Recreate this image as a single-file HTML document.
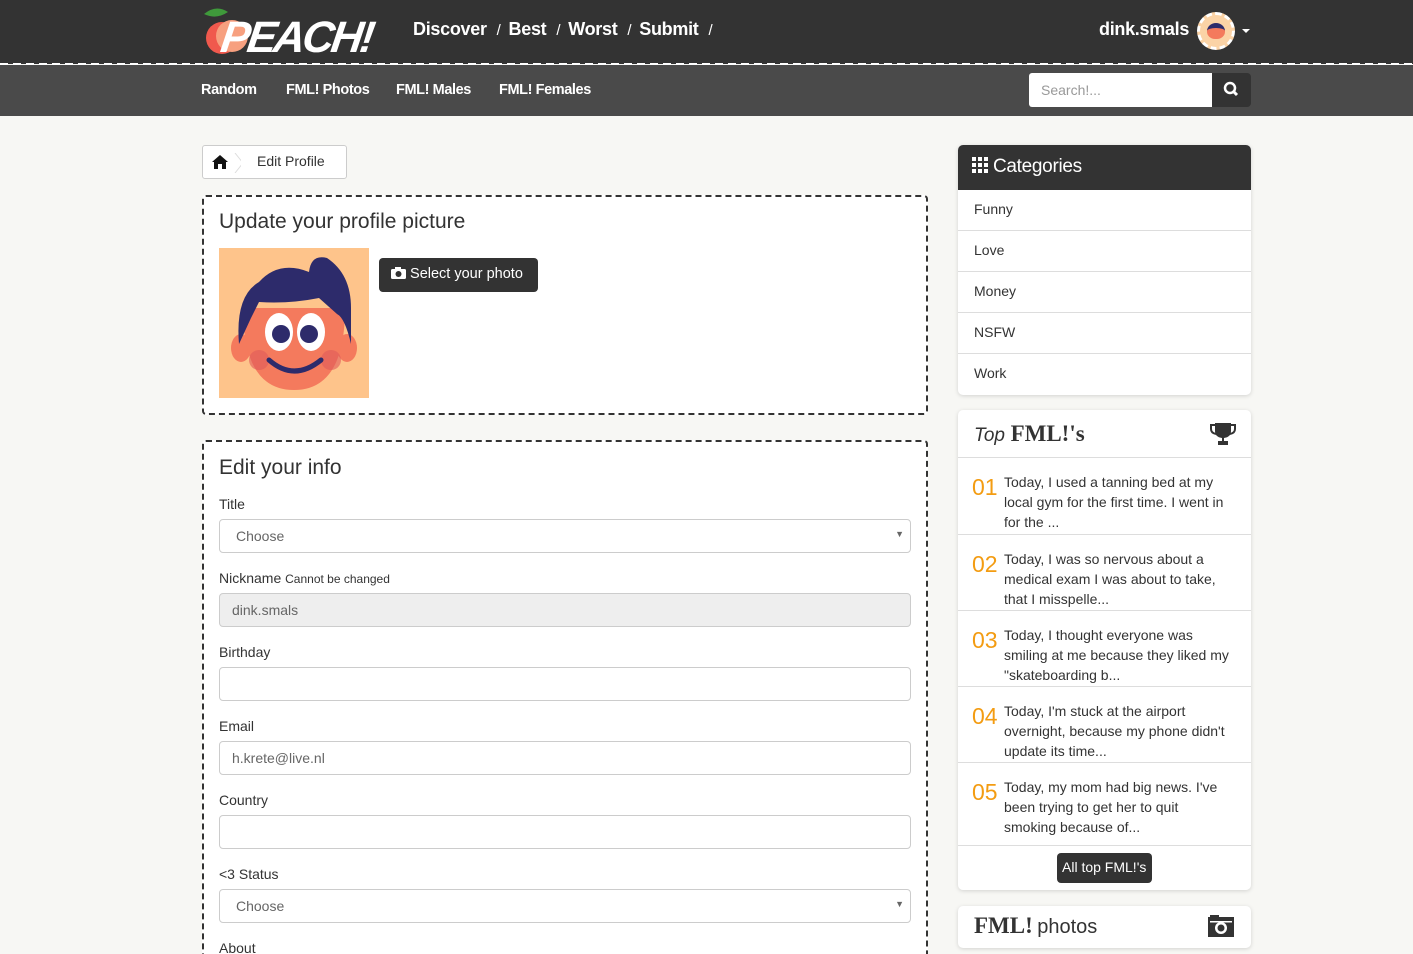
<!DOCTYPE html>
<html style="width:1413px;height:954px;overflow:hidden"><head><meta charset="utf-8"><style>
*{box-sizing:border-box}
body{margin:0;width:1413px;height:954px;overflow:hidden;position:relative;background:#f7f7f4;font-family:"Liberation Sans","DejaVu Sans",sans-serif;color:#333}
.top{position:absolute;left:0;top:0;width:1413px;height:64px;background:#333}
.dash{position:absolute;left:0;top:63px;width:1413px;height:2px;background:repeating-linear-gradient(90deg,#fff 0 8px,transparent 8px 13px)}
.sub{position:absolute;left:0;top:65px;width:1413px;height:51px;background:#4a4a4a}
.nav{position:absolute;top:19px;color:#fff;font-weight:bold;font-size:18px;letter-spacing:-0.3px}
.nav span{margin:0 8px 0 10px;font-weight:normal;font-size:15px}
.sn{position:absolute;top:82px;color:#fff;font-weight:bold;font-size:14.5px;letter-spacing:-0.4px}
.box{position:absolute;background:#fff;border:2px dashed #333;border-radius:4px}
.lbl{position:absolute;left:219px;font-size:14px;color:#333}
.inp{position:absolute;left:219px;width:692px;height:34px;border:1px solid #ccc;border-radius:4px;background:#fff;font-size:14px;color:#666;padding:8px 12px}
.card{position:absolute;left:958px;width:293px;background:#fff;border-radius:5px;box-shadow:0 1px 4px rgba(0,0,0,.15)}
.cat{height:41px;border-bottom:1px solid #ddd;padding:11px 16px;font-size:14px}
.item{position:relative;height:76px;border-top:1px solid #ddd;padding:14px 20px 0 46px;font-size:14px;line-height:20px;color:#333}
.item b{position:absolute;left:14px;top:19px;color:#f39c12;font-size:23px;font-weight:normal}
</style></head><body>
<div class="top"></div><div class="dash"></div><div class="sub"></div>
<svg style="position:absolute;left:202px;top:4px" width="190" height="56" viewBox="0 0 190 56">
<circle cx="20" cy="34" r="16" fill="#f0594d"/><circle cx="30" cy="32" r="16" fill="#f7a07f"/>
<path d="M2 10 Q14 0 26 8 Q14 16 2 10Z" fill="#3f9a3b"/>
<text x="24" y="48" font-family="Liberation Sans" font-weight="bold" font-style="italic" font-size="44" fill="#fff" letter-spacing="-3" transform="skewX(-8)">PEACH!</text>
</svg>
<div class="nav" style="left:413px">Discover<span>/</span>Best<span>/</span>Worst<span>/</span>Submit<span>/</span></div>
<div class="nav" style="left:1099px">dink.smals</div>
<div style="position:absolute;left:1197px;top:12px;width:38px;height:38px;border-radius:50%;background:#fbd3a6;border:3px dashed #fff"><div style="margin:8px auto;width:18px;height:16px;border-radius:50% 50% 45% 45%;background:#f47a5d;border-top:5px solid #2d2b6b"></div></div>
<div style="position:absolute;left:1242px;top:29px;border:4px solid transparent;border-top-color:#fff"></div>
<div class="sn" style="left:201px">Random</div><div class="sn" style="left:286px">FML! Photos</div><div class="sn" style="left:396px">FML! Males</div><div class="sn" style="left:499px">FML! Females</div>
<div style="position:absolute;left:1029px;top:73px;width:184px;height:34px;background:#fff;border-radius:3px 0 0 3px;padding:9px 12px;font-size:14px;color:#999">Search!...</div>
<div style="position:absolute;left:1212px;top:73px;width:39px;height:34px;background:#333;border-radius:0 4px 4px 0"><svg width="39" height="34"><circle cx="18" cy="15" r="5" fill="none" stroke="#fff" stroke-width="2.5"/><line x1="22" y1="19" x2="25" y2="22" stroke="#fff" stroke-width="3"/></svg></div>

<div style="position:absolute;left:202px;top:145px;width:145px;height:34px;background:#fff;border:1px solid #ccc;border-radius:3px"></div>
<svg style="position:absolute;left:211px;top:153px" width="30" height="20"><path d="M9 2 L1 9 H3 V16 H7 V11 H11 V16 H15 V9 H17Z" fill="#111"/><path d="M24 0 L32 10 L24 20" fill="none" stroke="#ddd"/></svg>
<div style="position:absolute;left:257px;top:153px;font-size:14px">Edit Profile</div>

<div class="box" style="left:202px;top:195px;width:726px;height:220px"></div>
<div style="position:absolute;left:219px;top:210px;font-size:21px;color:#333">Update your profile picture</div>
<svg style="position:absolute;left:219px;top:248px" width="150" height="150" viewBox="0 0 150 150">
<rect width="150" height="150" fill="#fec48b"/>
<ellipse cx="22" cy="100" rx="10" ry="14" fill="#f47a5d"/><ellipse cx="128" cy="100" rx="10" ry="14" fill="#f47a5d"/>
<path d="M24 60 Q24 142 75 142 Q126 142 126 60Z" fill="#f47a5d"/>
<path d="M20 96 Q16 48 40 34 Q60 12 90 24 Q92 6 108 10 Q132 26 132 60 L132 96 Q126 70 118 66 L100 50 Q70 56 40 54 L32 70Z" fill="#2d2b6b"/>
<ellipse cx="60" cy="84" rx="14" ry="19" fill="#fff"/><ellipse cx="92" cy="84" rx="14" ry="19" fill="#fff"/>
<circle cx="62" cy="86" r="9" fill="#2d2b6b"/><circle cx="90" cy="86" r="9" fill="#2d2b6b"/>
<circle cx="40" cy="112" r="10" fill="#e05a5a" opacity=".6"/><circle cx="112" cy="112" r="10" fill="#e05a5a" opacity=".6"/>
<path d="M50 112 Q75 134 102 112" fill="none" stroke="#2d2b6b" stroke-width="5" stroke-linecap="round"/>
</svg>
<div style="position:absolute;left:379px;top:258px;width:159px;height:34px;background:#333;border-radius:4px;color:#fff;font-size:14.5px;padding:8px 0 0 12px"><svg width="15" height="12" style="vertical-align:-1px"><rect x="0" y="2" width="15" height="10" rx="1.5" fill="#fff"/><rect x="4" y="0" width="6" height="3" fill="#fff"/><circle cx="7.5" cy="7" r="3" fill="#333"/></svg> Select your photo</div>

<div class="box" style="left:202px;top:440px;width:726px;height:540px"></div>
<div style="position:absolute;left:219px;top:456px;font-size:21px">Edit your info</div>
<div class="lbl" style="top:496px">Title</div>
<div class="inp" style="top:519px;padding-left:16px">Choose<span style="position:absolute;right:6px;top:9px;font-size:9px">▼</span></div>
<div class="lbl" style="top:570px">Nickname <small style="font-size:12px">Cannot be changed</small></div>
<div class="inp" style="top:593px;background:#eee">dink.smals</div>
<div class="lbl" style="top:644px">Birthday</div>
<div class="inp" style="top:667px"></div>
<div class="lbl" style="top:718px">Email</div>
<div class="inp" style="top:741px">h.krete@live.nl</div>
<div class="lbl" style="top:792px">Country</div>
<div class="inp" style="top:815px"></div>
<div class="lbl" style="top:866px">&lt;3 Status</div>
<div class="inp" style="top:889px;padding-left:16px">Choose<span style="position:absolute;right:6px;top:9px;font-size:9px">▼</span></div>
<div class="lbl" style="top:940px">About</div>

<div class="card" style="top:145px;height:250px;overflow:hidden">
<div style="height:45px;background:#333;color:#fff;font-size:19px;padding:11px 14px;letter-spacing:-0.3px"><span style="display:inline-block;width:16px;height:16px;background:repeating-linear-gradient(90deg,#fff 0 4px,transparent 4px 6px);-webkit-mask:repeating-linear-gradient(0deg,#000 0 4px,transparent 4px 6px);vertical-align:-1px"></span> Categories</div>
<div class="cat">Funny</div><div class="cat">Love</div><div class="cat">Money</div><div class="cat">NSFW</div><div class="cat" style="border:0">Work</div>
</div>

<div class="card" style="top:410px;height:480px">
<div style="height:47px;padding:11px 16px;font-size:20px"><i style="font-size:19px">Top</i> <b style="font-family:'Liberation Serif',serif;font-size:23px">FML!'s</b>
<svg style="position:absolute;right:14px;top:12px" width="28" height="24"><path d="M6 1H22V9Q22 15 15 16V19H19V23H9V19H13V16Q6 15 6 9Z" fill="#333"/><path d="M6 3H2V7Q2 11 7 12M22 3H26V7Q26 11 21 12" fill="none" stroke="#333" stroke-width="2"/></svg></div>
<div class="item" style="height:77px"><b>01</b>Today, I used a tanning bed at my local gym for the first time. I went in for the ...</div>
<div class="item"><b>02</b>Today, I was so nervous about a medical exam I was about to take, that I misspelle...</div>
<div class="item"><b>03</b>Today, I thought everyone was smiling at me because they liked my "skateboarding b...</div>
<div class="item"><b>04</b>Today, I'm stuck at the airport overnight, because my phone didn't update its time...</div>
<div class="item" style="height:83px"><b>05</b>Today, my mom had big news. I've been trying to get her to quit smoking because of...</div>
<div style="border-top:1px solid #ddd;height:45px;position:relative"><div style="position:absolute;left:99px;top:7px;width:95px;height:30px;background:#333;color:#fff;border-radius:4px;font-size:14px;padding:6px 0 0 5px">All top FML!'s</div></div>
</div>

<div class="card" style="top:906px;height:42px;padding:7px 16px"><b style="font-family:'Liberation Serif',serif;font-size:23px">FML!</b> <span style="font-size:20px">photos</span>
<svg style="position:absolute;right:16px;top:8px" width="28" height="24"><rect x="1" y="3" width="26" height="20" fill="#333"/><rect x="3" y="1" width="9" height="3" fill="#333"/><circle cx="14" cy="14" r="6" fill="#fff"/><circle cx="14" cy="14" r="3.5" fill="#333"/><rect x="3" y="7" width="22" height="1.5" fill="#fff"/></svg></div>
</body></html>
